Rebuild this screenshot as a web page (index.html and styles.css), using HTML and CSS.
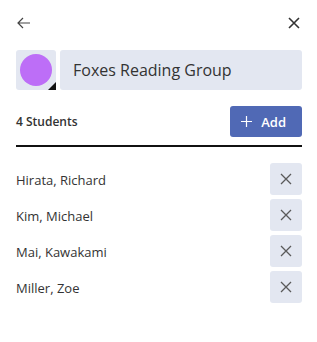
FILE: index.html
```html
<!DOCTYPE html>
<html lang="en">
<head>
  <meta charset="UTF-8">
  <meta name="viewport" content="width=device-width, initial-scale=1">
  <title>Edit Group</title>
  <link rel="stylesheet" href="styles.css">
</head>
<body>
  <div class="panel">
    <div class="top-bar">
      <button class="icon-btn" aria-label="Back">
        <svg width="16" height="16" viewBox="0 0 16 16"><path d="M14 8H2M7 3L2 8l5 5" fill="none" stroke="#444" stroke-width="1.2"/></svg>
      </button>
      <button class="icon-btn" aria-label="Close">
        <svg width="16" height="16" viewBox="0 0 16 16"><path d="M3 3l10 10M13 3L3 13" fill="none" stroke="#333" stroke-width="1.6"/></svg>
      </button>
    </div>

    <div class="group-row">
      <div class="swatch">
        <span class="dot"></span>
        <span class="corner"></span>
      </div>
      <input class="group-name" type="text" value="Foxes Reading Group">
    </div>

    <div class="count-row">
      <span class="count">4 Students</span>
      <button class="add-btn">
        <svg width="11" height="11" viewBox="0 0 11 11"><path d="M5.5 0v11M0 5.5h11" stroke="#fff" stroke-width="1.2"/></svg>
        Add
      </button>
    </div>

    <ul class="students">
      <li><span>Hirata, Richard</span><button class="remove" aria-label="Remove"><svg width="12" height="12" viewBox="0 0 12 12"><path d="M1 1l10 10M11 1L1 11" stroke="#5a5a5a" stroke-width="1.3"/></svg></button></li>
      <li><span>Kim, Michael</span><button class="remove" aria-label="Remove"><svg width="12" height="12" viewBox="0 0 12 12"><path d="M1 1l10 10M11 1L1 11" stroke="#5a5a5a" stroke-width="1.3"/></svg></button></li>
      <li><span>Mai, Kawakami</span><button class="remove" aria-label="Remove"><svg width="12" height="12" viewBox="0 0 12 12"><path d="M1 1l10 10M11 1L1 11" stroke="#5a5a5a" stroke-width="1.3"/></svg></button></li>
      <li><span>Miller, Zoe</span><button class="remove" aria-label="Remove"><svg width="12" height="12" viewBox="0 0 12 12"><path d="M1 1l10 10M11 1L1 11" stroke="#5a5a5a" stroke-width="1.3"/></svg></button></li>
    </ul>
  </div>
</body>
</html>
```

FILE: styles.css
```css
body {
  margin: 0;
  font-family: 'Open Sans', 'Noto Sans', sans-serif;
  color: #333;
  background: white;
}

.panel {
  padding: 11px 15px 16px 16px;
}

.top-bar {
  display: flex;
  justify-content: space-between;
  align-items: center;
  height: 24px;
}

.icon-btn {
  background: none;
  border: none;
  padding: 0;
  width: 16px;
  height: 24px;
  display: flex;
  align-items: center;
  cursor: pointer;
}

.group-row {
  display: flex;
  gap: 4px;
  margin-top: 15px;
  height: 40px;
}

.swatch {
  position: relative;
  width: 40px;
  height: 40px;
  background: #e3e7f1;
  border-radius: 3px;
  display: flex;
  align-items: center;
  justify-content: center;
  flex-shrink: 0;
}

.dot {
  width: 32px;
  height: 32px;
  border-radius: 50%;
  background: #bd6ef7;
}

.corner {
  position: absolute;
  right: 0;
  bottom: 0;
  width: 0;
  height: 0;
  border-left: 8px solid transparent;
  border-bottom: 8px solid #111;
}

.group-name {
  flex: 1;
  min-width: 0;
  border: none;
  border-radius: 3px;
  background: #e3e7f1;
  padding: 0 12px 0 13px;
  font-family: inherit;
  font-size: 16px;
  color: #333;
  outline: none;
}

.count-row {
  display: flex;
  justify-content: space-between;
  align-items: center;
  margin-top: 16px;
  padding-bottom: 8px;
  border-bottom: 2px solid #111;
}

.count {
  font-size: 12px;
  font-weight: 600;
}

.add-btn {
  display: flex;
  align-items: center;
  gap: 9px;
  height: 31px;
  padding: 0 16px 0 11px;
  border: none;
  border-radius: 3px;
  background: #5069b5;
  color: white;
  font-family: inherit;
  font-size: 13px;
  font-weight: 600;
  cursor: pointer;
}

.students {
  list-style: none;
  margin: 16px 0 0;
  padding: 0;
  display: flex;
  flex-direction: column;
  gap: 4px;
}

.students li {
  display: flex;
  justify-content: space-between;
  align-items: center;
  height: 32px;
  font-size: 13px;
}

.students li span {
  padding-top: 1px;
}

.remove {
  width: 32px;
  height: 32px;
  border: none;
  border-radius: 3px;
  background: #e3e7f1;
  display: flex;
  align-items: center;
  justify-content: center;
  padding: 0;
  cursor: pointer;
}
```
